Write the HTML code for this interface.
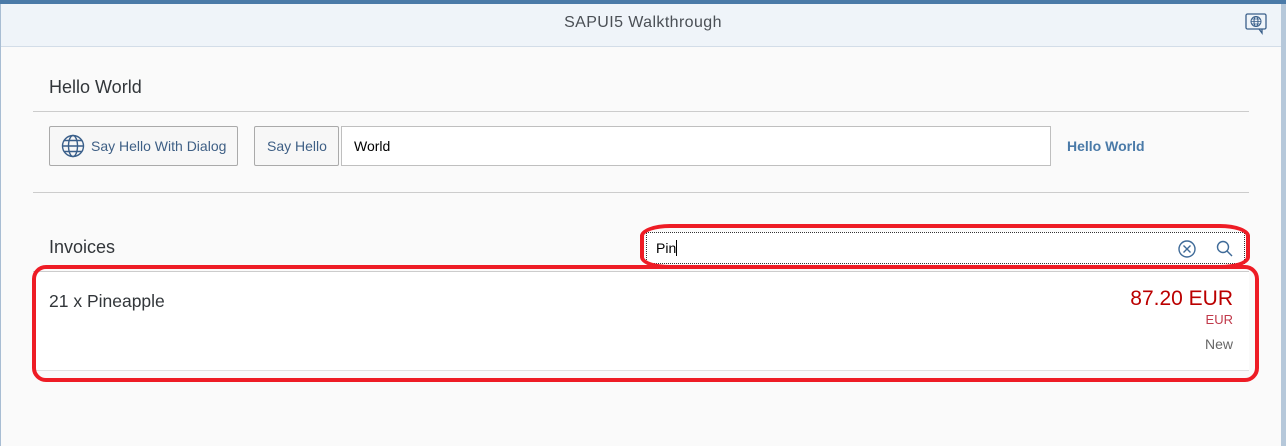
<!DOCTYPE html>
<html><head><meta charset="utf-8"><style>
*{margin:0;padding:0;box-sizing:border-box}
body{width:1286px;height:446px;background:#fafafa;font-family:"Liberation Sans",sans-serif;position:relative;overflow:hidden;color:#32363a}
.a{position:absolute}
</style></head><body>
<div class="a" style="left:0;top:0;width:1286px;height:4px;background:#4a7aa8"></div>
<div class="a" style="left:0;top:4px;width:1286px;height:43px;background:#eff4f9;border-bottom:1px solid #d3dde8"></div>
<div class="a" style="left:0;top:4px;width:1px;height:442px;background:#a8bdd3"></div>
<div class="a" style="left:1281px;top:4px;width:5px;height:442px;background:#b6c8da"></div>
<div class="a" style="left:0;top:14px;width:1286px;text-align:center;font-size:16px;letter-spacing:0.4px;color:#4a4f55">SAPUI5 Walkthrough</div>
<svg class="a" style="left:1245px;top:13px" width="24" height="22" viewBox="0 0 24 22"><rect x="1" y="1" width="20" height="15" rx="1.5" fill="none" stroke="#3a5f8a" stroke-width="1.3"/><path d="M14 16 L17 20 L17 16" fill="none" stroke="#3a5f8a" stroke-width="1.3"/><circle cx="11" cy="8.5" r="5" fill="none" stroke="#3a5f8a"/><ellipse cx="11" cy="8.5" rx="2" ry="5" fill="none" stroke="#3a5f8a"/><path d="M6 8.5H16M7 6H15M7 11H15" stroke="#3a5f8a" stroke-width=".8"/></svg>

<div class="a" style="left:49px;top:77px;font-size:18px">Hello World</div>
<div class="a" style="left:33px;top:111px;width:1216px;height:1px;background:#ccc"></div>
<div class="a" style="left:49px;top:126px;width:189px;height:40px;border:1px solid #aaa;border-radius:2px;background:#f7f7f7"></div>
<svg class="a" style="left:61px;top:134px" width="24" height="24" viewBox="0 0 24 24" fill="none" stroke="#3a5f8a" stroke-width="1.4"><circle cx="12" cy="12" r="10.5"/><ellipse cx="12" cy="12" rx="4.5" ry="10.5"/><path d="M1.5 12H22.5M3.5 6.5H20.5M3.5 17.5H20.5"/></svg>
<div class="a" style="left:91px;top:138px;font-size:14px;color:#3e5f85">Say Hello With Dialog</div>
<div class="a" style="left:254px;top:126px;width:85px;height:40px;border:1px solid #aaa;border-radius:2px;background:#f7f7f7"></div>
<div class="a" style="left:267px;top:138px;font-size:14px;color:#3e5f85">Say Hello</div>
<div class="a" style="left:341px;top:126px;width:710px;height:40px;border:1px solid #bfbfbf;background:#fff"></div>
<div class="a" style="left:354px;top:138px;font-size:14px;color:#000">World</div>
<div class="a" style="left:1067px;top:138px;font-size:14px;font-weight:bold;color:#4a7aa8">Hello World</div>
<div class="a" style="left:33px;top:192px;width:1216px;height:1px;background:#ccc"></div>

<div class="a" style="left:49px;top:237px;font-size:18px">Invoices</div>
<div class="a" style="left:646px;top:232px;width:599px;height:32px;border:1px dotted #333;background:#fff"></div>
<div class="a" style="left:656px;top:240px;font-size:14px;color:#000">Pin<span style="display:inline-block;width:1px;height:16px;background:#000;vertical-align:-3px"></span></div>
<svg class="a" style="left:1177px;top:239px" width="20" height="20" viewBox="0 0 20 20" fill="none" stroke="#3e6a98" stroke-width="1.4"><circle cx="10" cy="10" r="8"/><path d="M6.5 6.5L13.5 13.5M13.5 6.5L6.5 13.5"/></svg>
<svg class="a" style="left:1215px;top:239px" width="20" height="20" viewBox="0 0 20 20" fill="none" stroke="#3e6a98" stroke-width="1.4"><circle cx="8" cy="8" r="5.5"/><path d="M12 12L17 17"/></svg>
<div class="a" style="left:640px;top:224px;width:610px;height:45px;border:4px solid #ee1c25;border-radius:30px/12px"></div>

<div class="a" style="left:33px;top:271px;width:1216px;height:100px;background:#fff;border-top:1px solid #ccc;border-bottom:1px solid #e0e0e0"></div>
<div class="a" style="left:49px;top:291px;font-size:17.5px">21 x Pineapple</div>
<div class="a" style="left:1000px;top:287px;width:233px;text-align:right;font-size:21px;color:#b00">87.20 EUR</div>
<div class="a" style="left:1000px;top:312px;width:233px;text-align:right;font-size:13px;color:#c0394a">EUR</div>
<div class="a" style="left:1000px;top:336px;width:233px;text-align:right;font-size:14px;color:#666">New</div>
<div class="a" style="left:32px;top:265px;width:1227px;height:117px;border:4px solid #ee1c25;border-radius:14px"></div>
</body></html>
